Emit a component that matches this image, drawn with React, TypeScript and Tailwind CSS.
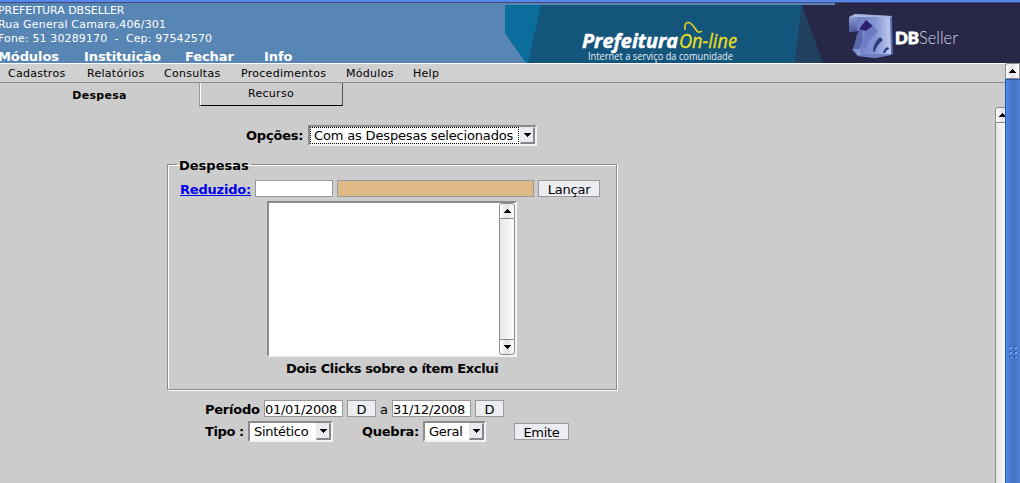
import type { ReactNode } from "react";

const font = "font-['DejaVu_Sans',sans-serif]";

function Arrow({ down = false }: { down?: boolean }) {
  return (
    <svg width="7" height="4" viewBox="0 0 7 4" shapeRendering="crispEdges" className="block shrink-0">
      <path d={down ? "M0 0h7v1h-1v1h-1v1h-1v1h-1v-1h-1v-1h-1v-1h-1z" : "M3 0h1v1h1v1h1v1h1v1h-7v-1h1v-1h1v-1h1z"} fill="#000" />
    </svg>
  );
}

function ScrollButton({ down = false, className = "w-4" }: { down?: boolean; className?: string }) {
  return (
    <div className={`flex h-4 shrink-0 items-center justify-center border border-[#8b8b8b] bg-linear-to-r from-white via-[#e2e2e2] to-white ${className}`}>
      <Arrow down={down} />
    </div>
  );
}

function Select({ children, className, focused = false }: { children: ReactNode; className: string; focused?: boolean }) {
  return (
    <div className={`flex h-[21px] shrink-0 border-2 border-t-[#8b8b8b] border-l-[#8b8b8b] border-r-[#f4f4f4] border-b-[#f4f4f4] bg-white ${className}`}>
      <div className={`flex min-w-0 flex-1 items-center border border-dotted pl-[3px] whitespace-nowrap ${focused ? "border-black" : "border-transparent"}`}>
        {children}
      </div>
      <div className="ml-px flex w-[15px] items-center justify-center border border-t-[#e8e8ec] border-l-[#e8e8ec] border-r-2 border-b-2 border-r-[#85858a] border-b-[#85858a] bg-[#eaebf1]">
        <Arrow down />
      </div>
    </div>
  );
}

function Button({ children, className }: { children: ReactNode; className: string }) {
  return (
    <button className={`flex h-[17px] shrink-0 items-center justify-center border border-[#999] bg-[#ecedf2] pt-[2px] whitespace-nowrap ${className}`}>
      {children}
    </button>
  );
}

function Banner() {
  return (
    <svg width="515" height="60" viewBox="505 3 515 60" className="block shrink-0">
      <defs>
        <linearGradient id="face" x1="0" y1="0" x2="1" y2="0">
          <stop offset="0" stopColor="#7480c6" />
          <stop offset=".55" stopColor="#8595d4" />
          <stop offset="1" stopColor="#c0cdf0" />
        </linearGradient>
        <linearGradient id="side" x1="0" y1="0" x2="0" y2="1">
          <stop offset="0" stopColor="#8c99d0" />
          <stop offset="1" stopColor="#4a559a" />
        </linearGradient>
      </defs>
      <rect x="505" y="3" width="515" height="60" fill="#272747" />
      <path d="M505 5H802L795 63H505z" fill="#14557c" />
      <path d="M505 5H541L528 63H526L505 33z" fill="#0a6d9c" />
      <path d="M505 33L526 63H505z" fill="#5785b4" />
      <path d="M802 5L823 63H795z" fill="#21415f" />
      <rect x="505" y="3" width="330" height="2" fill="#5785b4" />
      <text x="582" y="48" textLength="96" lengthAdjust="spacingAndGlyphs" fontFamily="'Open Sans', sans-serif" fontSize="20" fontWeight="700" fontStyle="italic" fill="#fff" stroke="#fff" strokeWidth=".5">Prefeitura</text>
      <text x="679" y="48" textLength="58" lengthAdjust="spacingAndGlyphs" fontFamily="'Open Sans', sans-serif" fontSize="20" fontStyle="italic" fill="#eadf21" stroke="#eadf21" strokeWidth=".3">On-line</text>
      <path d="M685 30C684 20 690 21 694 27S699 33 702 31" fill="none" stroke="#e8d81d" strokeWidth="1.5" />
      <text x="588" y="60" textLength="145" lengthAdjust="spacingAndGlyphs" fontFamily="'Open Sans', sans-serif" fontSize="10" fontWeight="500" fill="#e4f0f5">Internet a serviço da comunidade</text>
      <path d="M849 17L855 14L892 16L893 54L875 58L858 56L852 50Q855 45 856 38Q856 34 859 31L849 32z" fill="#5c68ae" />
      <path d="M849 17L857 17L857 30L849 32z" fill="url(#side)" />
      <path d="M849 17L855 14L892 16L890 18L857 17z" fill="#a9b6e0" />
      <path d="M857 17L890 18L891 54L862 54L859 49Q864 42 862 34Q862 30 866 29L857 30z" fill="url(#face)" />
      <path d="M859 29L866 20L873 26L866 31z" fill="#2d216e" />
      <path d="M866 31L873 26L878 32Q869 38 866 48L861 47Q865 40 864 32z" fill="#6b7bc5" />
      <path d="M853 49L859 49L863 55L858 56z" fill="#8796d4" />
      <path d="M873 52Q873 43 880 37L883 40Q877 45 875 51zM883 53Q884 48 888 47L889 49Q886 50 885 53z" fill="#2d3d7c" />
      <path d="M861 54L891 54L892 55L875 58L858 56z" fill="#7080bf" />
      <text x="895" y="44" textLength="24" lengthAdjust="spacingAndGlyphs" fontFamily="Lato, sans-serif" fontSize="17" fontWeight="900" fill="#fff" stroke="#fff" strokeWidth=".8">DB</text>
      <text x="919" y="44" textLength="39" lengthAdjust="spacingAndGlyphs" fontFamily="Lato, sans-serif" fontSize="18" fontWeight="300" fill="#d5d5e5">Seller</text>
    </svg>
  );
}

function Header() {
  return (
    <header className="flex h-[63px] shrink-0 flex-col bg-[#5785b4] text-white">
      <div className="h-[3px] shrink-0 border-b border-[#494777] bg-[#5488ec]" />
      <div className="flex">
        <div className="h-[60px] w-[505px] overflow-hidden pt-px text-[11px] leading-[14px] whitespace-pre">
          <div className="-ml-[2px] tracking-[-0.05px]">PREFEITURA DBSELLER</div>
          <div className="-ml-[2px] tracking-[0.18px]">Rua General Camara,406/301</div>
          <div className="-ml-[2px] tracking-[0.13px]">Fone: 51 30289170  -  Cep: 97542570</div>
          <nav className="-ml-[2px] flex pt-[2px] text-[13px] leading-[17px] font-bold tracking-[-0.1px]">
            <span className="w-[86px]">Módulos</span>
            <span className="w-[101px]">Instituição</span>
            <span className="w-[79px]">Fechar</span>
            <span>Info</span>
          </nav>
        </div>
        <Banner />
      </div>
    </header>
  );
}

export default function App() {
  return (
    <div className={`flex h-[483px] w-[1020px] flex-col overflow-hidden bg-[#ccc] text-[13px] leading-[17px] text-black ${font}`}>
      <Header />
      <div className="flex min-h-0 flex-1">
        <main className="flex w-[1005px] flex-col">
          <nav className="flex h-5 shrink-0 border-t border-b border-t-white border-b-[#8b8b8b] bg-[#d0d0d0] pt-px pl-2 text-[11px] leading-[18px] tracking-[0.28px] whitespace-nowrap">
            <span className="w-[79px]">Cadastros</span>
            <span className="w-[77px]">Relatórios</span>
            <span className="w-[77px]">Consultas</span>
            <span className="w-[105px]">Procedimentos</span>
            <span className="w-[67px]">Módulos</span>
            <span>Help</span>
          </nav>
          <div className="flex h-6 shrink-0 text-[11px]">
            <div className="flex w-[200px] justify-center border-r border-[#999] pt-1 font-bold tracking-[0.3px]">Despesa</div>
            <div className="flex h-[23px] w-[143px] justify-center border border-t-0 border-l-white border-r-[#555] border-b-black pt-[2px] pr-px tracking-[0.3px]">Recurso</div>
          </div>
          <div className="flex min-h-0 flex-1">
            <form className="w-[995px]">
              <div className="flex pt-[18px] pl-[246px]">
                <span className="w-[62px] pt-[2px] font-bold tracking-[-0.2px]">Opções:</span>
                <Select focused className="w-[229px] tracking-[-0.16px]">Com as Despesas selecionados</Select>
              </div>
              <fieldset className="mt-[11px] ml-[167px] h-[233px] w-[450px] border border-[#8b8b8b] shadow-[1px_1px_0_#fff,inset_1px_1px_0_#fff]">
                <legend className="ml-[9px] h-[15px] px-[2px] font-bold">Despesas</legend>
                <div className="flex pt-2 pl-3">
                  <a className="w-[75px] pt-px font-bold tracking-[-0.2px] text-[#0000ee]"><span className="underline">Reduzido:</span></a>
                  <div className="h-[17px] w-[78px] border border-[#999] bg-white" />
                  <div className="ml-1 h-[17px] w-[197px] border border-[#999] bg-[#deb887]" />
                  <Button className="ml-1 w-[62px] tracking-[-0.2px]">Lançar</Button>
                </div>
                <div className="mt-[3px] ml-[99px] flex h-[156px] w-[250px] justify-end border-2 border-t-[#8b8b8b] border-l-[#8b8b8b] border-r-[#f4f4f4] border-b-[#f4f4f4] bg-white">
                  <div className="flex w-4 flex-col">
                    <ScrollButton className="w-4 rounded-t-[3px]" />
                    <div className="flex-1 border-x border-[#8b8b8b] bg-linear-to-r from-[#e6e6ea] to-white" />
                    <ScrollButton down className="w-4 rounded-b-[3px]" />
                  </div>
                </div>
                <div className="pt-[3px] pl-[118px] font-bold tracking-[-0.36px]">Dois Clicks sobre o ítem Exclui</div>
              </fieldset>
              <div className="mt-[10px] ml-[205px] flex">
                <span className="w-[58px] pt-px font-bold tracking-[-0.25px]">Período</span>
                <div className="ml-px flex h-[17px] w-[79px] items-center border border-[#999] bg-white pt-[2px] tracking-[-0.3px]">01/01/2008</div>
                <Button className="ml-1 w-[29px]">D</Button>
                <span className="ml-1 w-3 pt-px">a</span>
                <div className="flex h-[17px] w-[79px] items-center border border-[#999] bg-white pt-[2px] tracking-[-0.3px]">31/12/2008</div>
                <Button className="ml-1 w-[29px]">D</Button>
              </div>
              <div className="mt-[3px] ml-[205px] flex">
                <span className="w-[43px] pt-[2px] font-bold tracking-[-0.4px]">Tipo :</span>
                <Select className="w-[85px] tracking-[-0.3px]">Sintético</Select>
                <span className="ml-[29px] w-[61px] pt-[2px] font-bold tracking-[-0.25px]">Quebra:</span>
                <Select className="w-[63px] tracking-[-0.3px]">Geral</Select>
                <Button className="mt-[2px] ml-7 w-[55px] tracking-[-0.3px]">Emite</Button>
              </div>
            </form>
            <aside className="w-[10px] overflow-hidden">
              <ScrollButton className="w-[15px] rounded-tl-[3px]" />
              <div className="h-[360px] w-[15px] border-x border-[#8b8b8b] bg-linear-to-r from-[#e6e6ea] to-white" />
            </aside>
          </div>
        </main>
        <aside className="flex w-[15px] flex-col">
          <ScrollButton className="w-[15px] rounded-tl-[3px]" />
          <div className="flex flex-1 justify-center border-t border-l border-[#2858ac] bg-linear-to-r from-[#508be8] via-[#4472bd] to-[#4b80d8] pt-[266px]">
            <svg width="8" height="12" viewBox="0 0 8 12" shapeRendering="crispEdges">
              <path d="M0 0h2v2H0zM5 0h2v2H5zM0 5h2v2H0zM5 5h2v2H5zM0 10h2v2H0zM5 10h2v2H5z" fill="#2c5aaa" />
              <path d="M1 1h2v2H1zM6 1h2v2H6zM1 6h2v2H1zM6 6h2v2H6zM1 11h2v1H1zM6 11h2v1H6z" fill="#79a7f1" />
            </svg>
          </div>
        </aside>
      </div>
    </div>
  );
}
